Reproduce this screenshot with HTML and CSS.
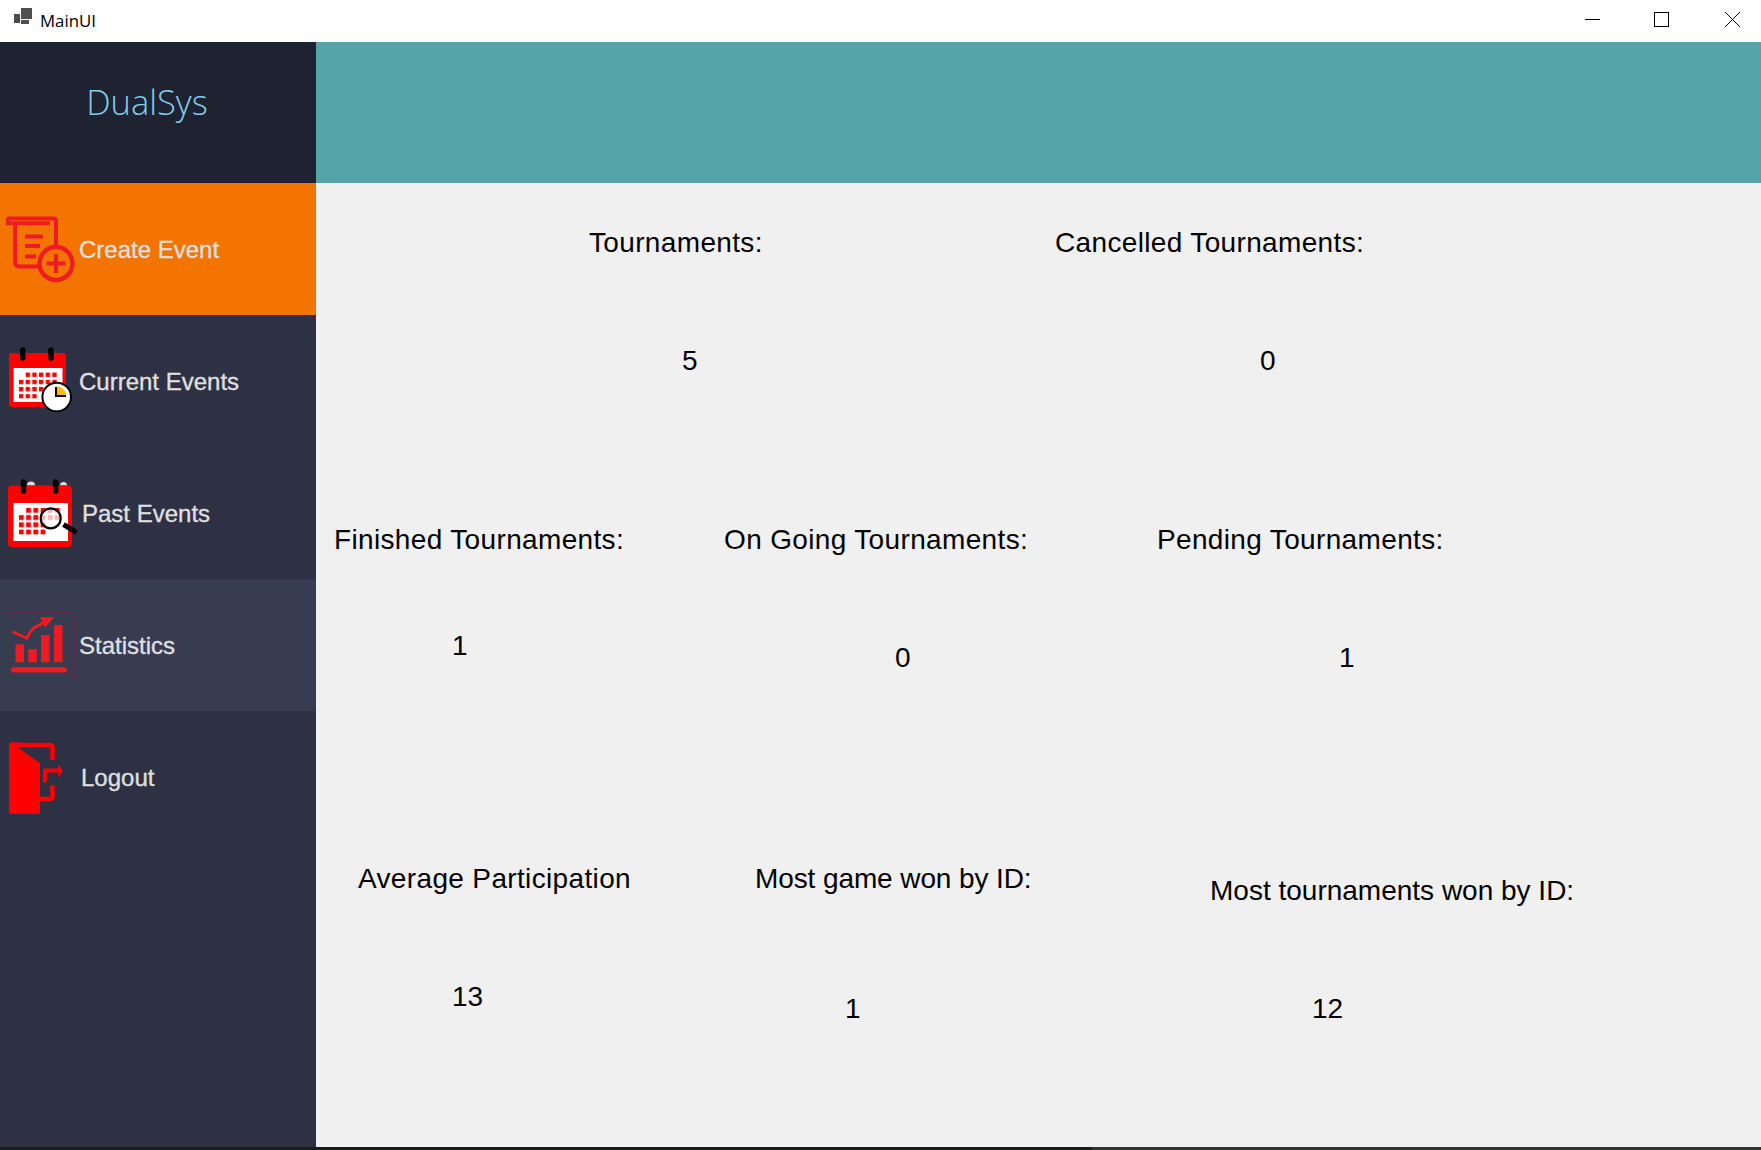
FILE: index.html
```html
<!DOCTYPE html>
<html lang="en">
<head>
<meta charset="utf-8">
<title>MainUI</title>
<link rel="stylesheet" href="styles.css">
</head>
<body>
<div class="window">
  <header class="titlebar">
    <div class="title-left">
      <svg class="app-icon" width="20" height="20" viewBox="0 0 20 20"><rect x="1" y="6" width="6" height="9" fill="#4a4a4a"/><rect x="8" y="0" width="11" height="11" fill="#4f4f4f"/><rect x="8" y="12" width="8" height="4" fill="#4f4f4f"/></svg>
      <span class="app-title">MainUI</span>
    </div>
    <div class="controls">
      <svg width="15" height="15" viewBox="0 0 15 15"><path d="M0 7.5H15" stroke="#000" fill="none"/></svg>
      <svg width="15" height="15" viewBox="0 0 15 15"><rect x=".5" y=".5" width="14" height="14" stroke="#000" fill="none"/></svg>
      <svg class="close" width="15" height="15" viewBox="0 0 15 15"><path d="M0 0L15 15M15 0L0 15" stroke="#000" fill="none"/></svg>
    </div>
  </header>
  <div class="app">
    <aside class="sidebar">
      <div class="logo">DualSys</div>
      <nav class="menu">
        <div class="item active">
          <svg class="icon" width="78" height="132" viewBox="0 -17 78 132">
            <g fill="none" stroke="#ed1c24" stroke-width="4">
              <path d="M15 24V62Q15 66.500 20 66.500H43"/>
              <path d="M56 48V21Q56 18.500 54 18.500H9Q7.800 18.500 7.800 20V23.300H50"/>
              <path d="M25 36.500H43M25 46H40M25 56.500H36"/>
              <circle cx="56" cy="63.500" r="16.500" stroke-width="4.400" fill="#f37500"/>
              <path d="M46.500 63.500H65.500M56 54V73" stroke-width="4"/>
            </g>
          </svg>
          <span class="label">Create Event</span>
        </div>
        <div class="item">
          <svg class="icon" width="78" height="132" viewBox="0 -20 78 132">
            <defs>
              <pattern id="dots-a" x="19" y="37.600" width="6.670" height="7.200" patternUnits="userSpaceOnUse"><rect width="4.400" height="4.400" fill="#f00"/></pattern>
              <pattern id="dots-b" x="19" y="38" width="7.200" height="7.200" patternUnits="userSpaceOnUse"><rect width="4.800" height="4.800" fill="#f00"/></pattern>
            </defs>
            <rect x="9" y="18" width="57" height="54" rx="3" fill="#f00"/>
            <rect x="13.500" y="33" width="49" height="34" fill="#fff"/>
            <path d="M25 37H57V59H38V63.500H18.500V44.500H25Z" fill="url(#dots-a)"/>
            <path d="M22.700 15V23M51 15V23" stroke="#000" stroke-width="5.500" stroke-linecap="round"/>
            <circle cx="56.700" cy="62" r="14.300" fill="#fff" stroke="#000" stroke-width="2"/>
            <path d="M56 60.500V51.500A10 10 0 0 1 66.500 60.500Z" fill="#fbbc05"/>
            <path d="M56 52V61H66" fill="none" stroke="#000" stroke-width="2"/>
          </svg>
          <span class="label">Current Events</span>
        </div>
        <div class="item past">
          <svg class="icon" width="78" height="132" viewBox="0 -23 78 132">
            <path d="M27 15.500A3.500 3.500 0 0 1 35 15.500ZM60 15.500A3.500 3.500 0 0 1 67 15.500Z" fill="#ddd"/>
            <rect x="8" y="15.500" width="64" height="61.500" rx="4" fill="#f00"/>
            <rect x="13.500" y="33" width="54.500" height="38" fill="#fff"/>
            <path d="M26 37.500H62V52H47V65H18.500V44.500H26Z" fill="url(#dots-b)"/>
            <path d="M23.500 12V21M55.700 12V21" stroke="#000" stroke-width="5.500" stroke-linecap="round"/>
            <circle cx="50.700" cy="48.300" r="10" fill="#fff" fill-opacity=".7" stroke="#000" stroke-width="2.200"/>
            <path d="M63.500 54.500L76.500 62.300" stroke="#000" stroke-width="5"/>
          </svg>
          <span class="label">Past Events</span>
        </div>
        <div class="item hover">
          <svg class="icon" width="78" height="132" viewBox="0 -26 78 132">
            <rect x="5.500" y="7.500" width="69" height="67" fill="none" stroke="#5e2b3f"/>
            <g fill="#ed1c24">
              <rect x="15.500" y="39.300" width="8.500" height="18"/>
              <rect x="28.300" y="44.300" width="8.500" height="13"/>
              <rect x="41" y="30" width="8.500" height="27.300"/>
              <rect x="54" y="20" width="8.500" height="37.300"/>
              <rect x="11" y="62.300" width="56" height="5.200" rx="2.600"/>
              <path d="M40 12.300H54L45 22.700Z"/>
            </g>
            <path d="M12.700 26.700L26.700 33.300Q29.500 27 33.300 23.300L45 16.700" fill="none" stroke="#ed1c24" stroke-width="2.900" stroke-linejoin="round"/>
          </svg>
          <span class="label">Statistics</span>
        </div>
        <div class="item logout">
          <svg class="icon" width="78" height="132" viewBox="0 -24 78 132">
            <path d="M9 9.500A2 2 0 0 1 11 7.500H19V13.300L40 28.300V77A2 2 0 0 1 38 79H11A2 2 0 0 1 9 77Z" fill="#f00"/>
            <path d="M12 10H50.500A2 2 0 0 1 52.500 12V25M52.500 50.500V62A2 2 0 0 1 50.500 64H40" fill="none" stroke="#f00" stroke-width="4.600"/>
            <path d="M45 47.500V35.500H58.500" fill="none" stroke="#f00" stroke-width="4"/>
            <path d="M58.300 29.300L62.700 36L58.300 42.700Z" fill="#f00"/>
          </svg>
          <span class="label">Logout</span>
        </div>
      </nav>
    </aside>
    <main class="main">
      <div class="topbar"></div>
      <section class="stats">
        <div class="row row-1">
          <div class="stat"><div class="name wide">Tournaments:</div><div class="value v1">5</div></div>
          <div class="stat"><div class="name wide">Cancelled Tournaments:</div><div class="value v2">0</div></div>
        </div>
        <div class="row row-2">
          <div class="stat"><div class="name wide">Finished Tournaments:</div><div class="value v3">1</div></div>
          <div class="stat"><div class="name wide">On Going Tournaments:</div><div class="value v4">0</div></div>
          <div class="stat"><div class="name wide">Pending Tournaments:</div><div class="value v5">1</div></div>
        </div>
        <div class="row row-3">
          <div class="stat"><div class="name wide">Average Participation</div><div class="value v6">13</div></div>
          <div class="stat"><div class="name tight">Most game won by ID:</div><div class="value v7">1</div></div>
          <div class="stat low"><div class="name">Most tournaments won by ID:</div><div class="value v8">12</div></div>
        </div>
      </section>
    </main>
  </div>
  <footer class="strip"></footer>
</div>
</body>
</html>
```
FILE: styles.css
```css
* { box-sizing: border-box; }
html, body { margin: 0; height: 100%; }
body { font-family: "Liberation Sans", Arial, sans-serif; overflow: hidden; }
.window { width: 1761px; height: 1150px; display: flex; flex-direction: column; background: #fff; }

.titlebar { height: 42px; flex: none; display: flex; align-items: center; justify-content: space-between; padding: 0 21px 3px 13px; background: #fff; }
.title-left { display: flex; align-items: center; gap: 7px; }
.app-icon { display: block; margin-top: -3px; }
.app-title { font-family: "Open Sans", "Noto Sans", sans-serif; font-size: 16.800px; color: #000; padding-top: 2px; }
.controls { display: flex; gap: 54px; align-items: center; }
.controls svg { display: block; }
.controls .close { margin-left: 2px; }

.app { flex: 1; display: flex; min-height: 0; }
.sidebar { width: 316px; flex: none; background: #2e3144; display: flex; flex-direction: column; }
.logo { height: 141px; flex: none; background: #1f2230; color: #7fcdee; font-family: "Open Sans", "Noto Sans", sans-serif; font-weight: 300; font-size: 34.500px; display: flex; justify-content: center; align-items: center; padding: 0 22px 22px 0; }
.menu { display: flex; flex-direction: column; }
.item { height: 132px; display: flex; align-items: center; color: #e0e0e0; font-size: 24px; }
.item .icon { display: block; flex: none; }
.item.active { background: #f37500; }
.item.hover { background: #383c50; }
.label { margin-left: 1px; padding-top: 2px; -webkit-text-stroke: .3px #e0e0e0; }
.past .label { margin-left: 4px; }
.logout .label { margin-left: 3px; }

.main { flex: 1; display: flex; flex-direction: column; min-width: 0; }
.topbar { height: 141px; flex: none; background: #55a4a7; }
.stats { flex: 1; background: #f0f0f0; color: #000; font-size: 28px; display: grid; grid-template-rows: 297px 339px 1fr; padding-top: 47px; }
.row { display: grid; align-items: start; }
.row-1 { grid-template-columns: 466px 1fr; padding-left: 273px; }
.row-2 { grid-template-columns: 390px 433px 1fr; padding-left: 18px; }
.row-3 { grid-template-columns: 397px 455px 1fr; padding-left: 42px; }
.name, .value { line-height: 26px; white-space: nowrap; }
.name.wide { letter-spacing: .35px; }
.name.tight { letter-spacing: -.1px; }
.low { margin-top: 12px; }
.v1 { margin: 92px 0 0 93px; }
.v2 { margin: 92px 0 0 205px; }
.v3 { margin: 80px 0 0 118px; }
.v4 { margin: 92px 0 0 171px; }
.v5 { margin: 92px 0 0 182px; }
.v6 { margin: 92px 0 0 94px; }
.v7 { margin: 104px 0 0 90px; }
.v8 { margin: 92px 0 0 102px; }

.strip { height: 3px; flex: none; background: linear-gradient(90deg, #1c1c1c 0 62%, #333 62% 100%); }
```
